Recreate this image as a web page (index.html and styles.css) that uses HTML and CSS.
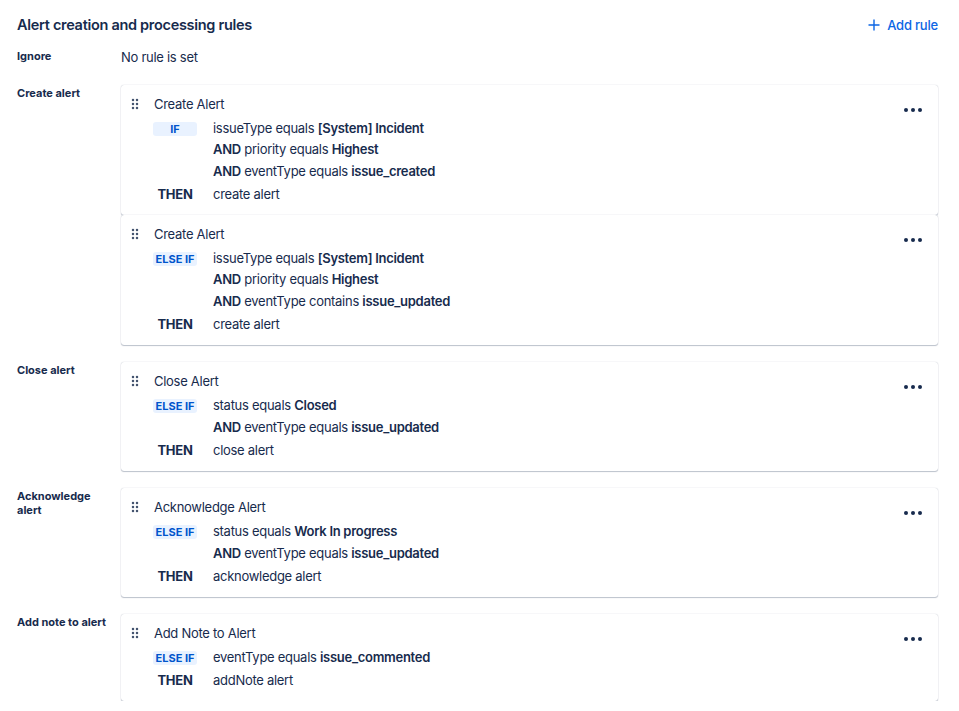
FILE: index.html
```html
<!DOCTYPE html>
<html lang="en">
<head>
<meta charset="utf-8">
<title>Alert creation and processing rules</title>
<link rel="stylesheet" href="styles.css">
</head>
<body>
<div class="page">
  <div class="head">
    <h2 class="title">Alert creation and processing rules</h2>
    <button class="add-rule" type="button">
      <svg class="plus" width="12" height="12" viewBox="0 0 12 12" aria-hidden="true"><path d="M6 0.5v11M0.5 6h11" stroke="currentColor" stroke-width="1.4" fill="none"/></svg>
      <span>Add rule</span>
    </button>
  </div>

  <div class="rows">
    <div class="row">
      <div class="label label-inline">Ignore</div>
      <div class="content"><div class="empty">No rule is set</div></div>
    </div>

    <div class="row">
      <div class="label">Create alert</div>
      <div class="content">
        <div class="card">
          <div class="card-body">
            <div class="card-head">
              <span class="drag"><svg width="8" height="12" viewBox="0 0 8 12" aria-hidden="true"><g fill="#44546F"><circle cx="2" cy="2" r="1.25"/><circle cx="6" cy="2" r="1.25"/><circle cx="2" cy="6" r="1.25"/><circle cx="6" cy="6" r="1.25"/><circle cx="2" cy="10" r="1.25"/><circle cx="6" cy="10" r="1.25"/></g></svg></span>
              <span class="name">Create Alert</span>
            </div>
            <div class="clause">
              <span class="badge">IF</span>
              <div class="conds">
                <div class="line">issueType equals <b>[System] Incident</b></div>
                <div class="line"><b>AND</b> priority equals <b>Highest</b></div>
                <div class="line"><b>AND</b> eventType equals <b>issue_created</b></div>
              </div>
            </div>
            <div class="clause then">
              <span class="kw">THEN</span>
              <div class="line">create alert</div>
            </div>
          </div>
          <button class="more" type="button" aria-label="More"><svg width="24" height="24" viewBox="0 0 24 24" aria-hidden="true"><g fill="#172B4D"><circle cx="5" cy="12" r="2"/><circle cx="12" cy="12" r="2"/><circle cx="19" cy="12" r="2"/></g></svg></button>
        </div>
        <div class="card">
          <div class="card-body">
            <div class="card-head">
              <span class="drag"><svg width="8" height="12" viewBox="0 0 8 12" aria-hidden="true"><g fill="#44546F"><circle cx="2" cy="2" r="1.25"/><circle cx="6" cy="2" r="1.25"/><circle cx="2" cy="6" r="1.25"/><circle cx="6" cy="6" r="1.25"/><circle cx="2" cy="10" r="1.25"/><circle cx="6" cy="10" r="1.25"/></g></svg></span>
              <span class="name">Create Alert</span>
            </div>
            <div class="clause">
              <span class="badge">ELSE IF</span>
              <div class="conds">
                <div class="line">issueType equals <b>[System] Incident</b></div>
                <div class="line"><b>AND</b> priority equals <b>Highest</b></div>
                <div class="line"><b>AND</b> eventType contains <b>issue_updated</b></div>
              </div>
            </div>
            <div class="clause then">
              <span class="kw">THEN</span>
              <div class="line">create alert</div>
            </div>
          </div>
          <button class="more" type="button" aria-label="More"><svg width="24" height="24" viewBox="0 0 24 24" aria-hidden="true"><g fill="#172B4D"><circle cx="5" cy="12" r="2"/><circle cx="12" cy="12" r="2"/><circle cx="19" cy="12" r="2"/></g></svg></button>
        </div>
      </div>
    </div>

    <div class="row">
      <div class="label">Close alert</div>
      <div class="content">
        <div class="card">
          <div class="card-body">
            <div class="card-head">
              <span class="drag"><svg width="8" height="12" viewBox="0 0 8 12" aria-hidden="true"><g fill="#44546F"><circle cx="2" cy="2" r="1.25"/><circle cx="6" cy="2" r="1.25"/><circle cx="2" cy="6" r="1.25"/><circle cx="6" cy="6" r="1.25"/><circle cx="2" cy="10" r="1.25"/><circle cx="6" cy="10" r="1.25"/></g></svg></span>
              <span class="name">Close Alert</span>
            </div>
            <div class="clause">
              <span class="badge">ELSE IF</span>
              <div class="conds">
                <div class="line">status equals <b>Closed</b></div>
                <div class="line"><b>AND</b> eventType equals <b>issue_updated</b></div>
              </div>
            </div>
            <div class="clause then">
              <span class="kw">THEN</span>
              <div class="line">close alert</div>
            </div>
          </div>
          <button class="more" type="button" aria-label="More"><svg width="24" height="24" viewBox="0 0 24 24" aria-hidden="true"><g fill="#172B4D"><circle cx="5" cy="12" r="2"/><circle cx="12" cy="12" r="2"/><circle cx="19" cy="12" r="2"/></g></svg></button>
        </div>
      </div>
    </div>

    <div class="row">
      <div class="label">Acknowledge alert</div>
      <div class="content">
        <div class="card">
          <div class="card-body">
            <div class="card-head">
              <span class="drag"><svg width="8" height="12" viewBox="0 0 8 12" aria-hidden="true"><g fill="#44546F"><circle cx="2" cy="2" r="1.25"/><circle cx="6" cy="2" r="1.25"/><circle cx="2" cy="6" r="1.25"/><circle cx="6" cy="6" r="1.25"/><circle cx="2" cy="10" r="1.25"/><circle cx="6" cy="10" r="1.25"/></g></svg></span>
              <span class="name">Acknowledge Alert</span>
            </div>
            <div class="clause">
              <span class="badge">ELSE IF</span>
              <div class="conds">
                <div class="line">status equals <b>Work In progress</b></div>
                <div class="line"><b>AND</b> eventType equals <b>issue_updated</b></div>
              </div>
            </div>
            <div class="clause then">
              <span class="kw">THEN</span>
              <div class="line">acknowledge alert</div>
            </div>
          </div>
          <button class="more" type="button" aria-label="More"><svg width="24" height="24" viewBox="0 0 24 24" aria-hidden="true"><g fill="#172B4D"><circle cx="5" cy="12" r="2"/><circle cx="12" cy="12" r="2"/><circle cx="19" cy="12" r="2"/></g></svg></button>
        </div>
      </div>
    </div>

    <div class="row">
      <div class="label">Add note to alert</div>
      <div class="content">
        <div class="card">
          <div class="card-body">
            <div class="card-head">
              <span class="drag"><svg width="8" height="12" viewBox="0 0 8 12" aria-hidden="true"><g fill="#44546F"><circle cx="2" cy="2" r="1.25"/><circle cx="6" cy="2" r="1.25"/><circle cx="2" cy="6" r="1.25"/><circle cx="6" cy="6" r="1.25"/><circle cx="2" cy="10" r="1.25"/><circle cx="6" cy="10" r="1.25"/></g></svg></span>
              <span class="name">Add Note to Alert</span>
            </div>
            <div class="clause">
              <span class="badge">ELSE IF</span>
              <div class="conds">
                <div class="line">eventType equals <b>issue_commented</b></div>
              </div>
            </div>
            <div class="clause then">
              <span class="kw">THEN</span>
              <div class="line">addNote alert</div>
            </div>
          </div>
          <button class="more" type="button" aria-label="More"><svg width="24" height="24" viewBox="0 0 24 24" aria-hidden="true"><g fill="#172B4D"><circle cx="5" cy="12" r="2"/><circle cx="12" cy="12" r="2"/><circle cx="19" cy="12" r="2"/></g></svg></button>
        </div>
      </div>
    </div>
  </div>
</div>
</body>
</html>
```

FILE: styles.css
```css
* { box-sizing: border-box; }

html, body {
  margin: 0;
  padding: 0;
  background: #FFFFFF;
}

body {
  font-family: Inter, "Liberation Sans", Arial, sans-serif;
  color: #172B4D;
  font-size: 13px;
  letter-spacing: -0.28px;
}

.page {
  padding: 15px 21px 0 17px;
}

.head {
  display: flex;
  align-items: center;
  justify-content: space-between;
  height: 20px;
  margin-bottom: 12px;
}

.title {
  margin: 0;
  font-size: 14.5px;
  font-weight: 600;
  line-height: 20px;
  letter-spacing: -0.3px;
  color: #172B4D;
}

.add-rule {
  display: flex;
  align-items: center;
  gap: 7px;
  border: 0;
  background: none;
  padding: 0;
  font-family: inherit;
  font-size: 13px;
  font-weight: 500;
  letter-spacing: -0.2px;
  color: #0C66E4;
  line-height: 20px;
  cursor: pointer;
}

.plus { display: block; }

.rows {
  display: flex;
  flex-direction: column;
  gap: 17.5px;
}

.row {
  display: flex;
  gap: 8px;
}

.label {
  width: 96px;
  flex: none;
  padding-top: 1px;
  font-size: 11px;
  font-weight: 700;
  line-height: 14px;
  letter-spacing: 0;
  color: #172B4D;
}

.label-inline {
  padding-top: 2px;
}

.content {
  flex: 1;
  display: flex;
  flex-direction: column;
}

.empty {
  line-height: 20px;
}

.card {
  display: flex;
  align-items: flex-start;
  background: #FFFFFF;
  border-radius: 3px;
  box-shadow: 0 1px 1px rgba(9, 30, 66, 0.25), 0 0 1px rgba(9, 30, 66, 0.31);
  padding: 9px 9px 9.5px 10px;
}

.card-body {
  flex: 1;
  display: flex;
  flex-direction: column;
}

.card-head {
  display: flex;
  align-items: center;
  height: 20px;
  margin-bottom: 4px;
}

.drag {
  width: 23px;
  flex: none;
  display: flex;
  align-items: center;
}

.drag svg { display: block; }

.name {
  line-height: 20px;
}

.clause {
  display: flex;
  align-items: flex-start;
  padding-left: 22px;
}

.clause.then {
  margin-top: 1.5px;
}

.badge {
  flex: none;
  width: 44px;
  height: 14px;
  margin-top: 4px;
  margin-right: 16px;
  border-radius: 3px;
  background: #E9F2FF;
  color: #0055CC;
  font-size: 11px;
  font-weight: 700;
  line-height: 14px;
  letter-spacing: 0;
  text-align: center;
  text-transform: uppercase;
  white-space: nowrap;
}

.kw {
  flex: none;
  width: 44px;
  margin-right: 16px;
  text-align: center;
  font-weight: 700;
  line-height: 21.5px;
}

.conds {
  display: flex;
  flex-direction: column;
}

.line {
  line-height: 21.5px;
  white-space: nowrap;
}

.line b {
  font-weight: 600;
}

.more {
  flex: none;
  width: 32px;
  height: 32px;
  display: flex;
  align-items: center;
  justify-content: center;
  border: 0;
  background: none;
  padding: 0;
  border-radius: 3px;
  cursor: pointer;
}

.more svg { display: block; }
```
